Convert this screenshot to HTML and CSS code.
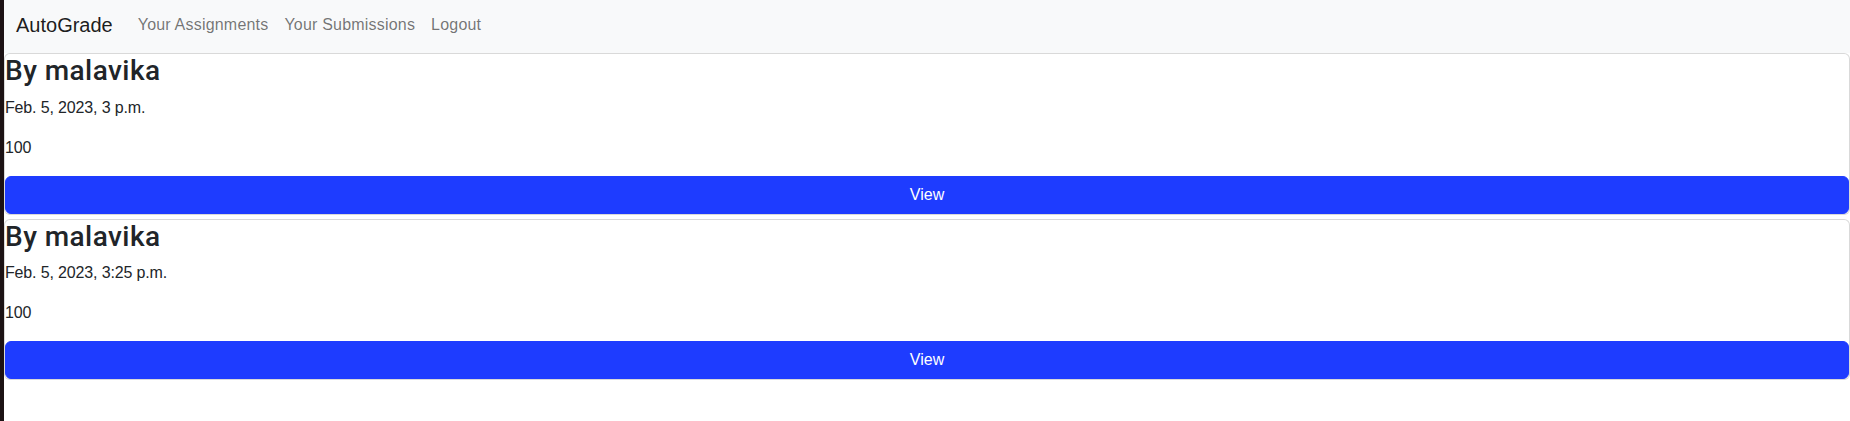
FILE: index.html
```html
<!DOCTYPE html>
<html lang="en">
<head>
<meta charset="utf-8">
<title>AutoGrade</title>
<link rel="stylesheet" href="styles.css">
</head>
<body>
<div class="edge"></div>
<div class="page">
  <nav class="navbar">
    <a class="brand" href="#">AutoGrade</a>
    <ul class="nav">
      <li><a class="nav-link" href="#">Your Assignments</a></li>
      <li><a class="nav-link" href="#">Your Submissions</a></li>
      <li><a class="nav-link" href="#">Logout</a></li>
    </ul>
  </nav>
  <main class="list">
    <section class="card">
      <h3 class="card-title">By malavika</h3>
      <p class="card-text">Feb. 5, 2023, 3 p.m.</p>
      <p class="card-text">100</p>
      <a class="btn" href="#">View</a>
    </section>
    <section class="card">
      <h3 class="card-title">By malavika</h3>
      <p class="card-text">Feb. 5, 2023, 3:25 p.m.</p>
      <p class="card-text">100</p>
      <a class="btn" href="#">View</a>
    </section>
  </main>
</div>
</body>
</html>
```

FILE: styles.css
```css
* { box-sizing: border-box; }
html, body { height: 100%; }
body {
  margin: 0;
  display: flex;
  font-family: "Liberation Sans", Arial, sans-serif;
  font-size: 16px;
  line-height: 1.5;
  color: #212529;
  background: #fff;
}
.edge {
  width: 4px;
  flex: 0 0 4px;
  background: #1c1214;
}
.page {
  flex: 1;
  min-width: 0;
}
.navbar {
  display: flex;
  align-items: center;
  height: 53px;
  padding: 0 12px 3px 12px;
  background: #f8f9fa;
}
.brand {
  font-size: 20px;
  line-height: 30px;
  color: rgba(0, 0, 0, 0.9);
  text-decoration: none;
  margin-right: 17px;
}
.nav {
  display: flex;
  list-style: none;
  margin: 0;
  padding: 0;
}
.nav-link {
  display: block;
  padding: 3px 8px;
  color: rgba(0, 0, 0, 0.55);
  text-decoration: none;
  letter-spacing: 0.2px;
}
.list {
  display: flex;
  flex-direction: column;
  gap: 4px;
}
.card {
  display: flex;
  flex-direction: column;
  border: 1px solid rgba(0, 0, 0, 0.15);
  border-radius: 6px;
  background: #fff;
}
.card-title {
  margin: 0 0 8px 0;
  font-family: Roboto, "Liberation Sans", sans-serif;
  font-weight: 500;
  font-size: 28px;
  line-height: 1.2;
  letter-spacing: 0.45px;
  color: #212529;
}
.card-text {
  margin: 0 0 16px 0;
  letter-spacing: -0.15px;
}
.btn {
  display: block;
  text-align: center;
  padding: 6px 12px;
  border: 1px solid #1e3cff;
  border-radius: 6px;
  background: #1e3cff;
  color: #fff;
  text-decoration: none;
  line-height: 24px;
}
```
